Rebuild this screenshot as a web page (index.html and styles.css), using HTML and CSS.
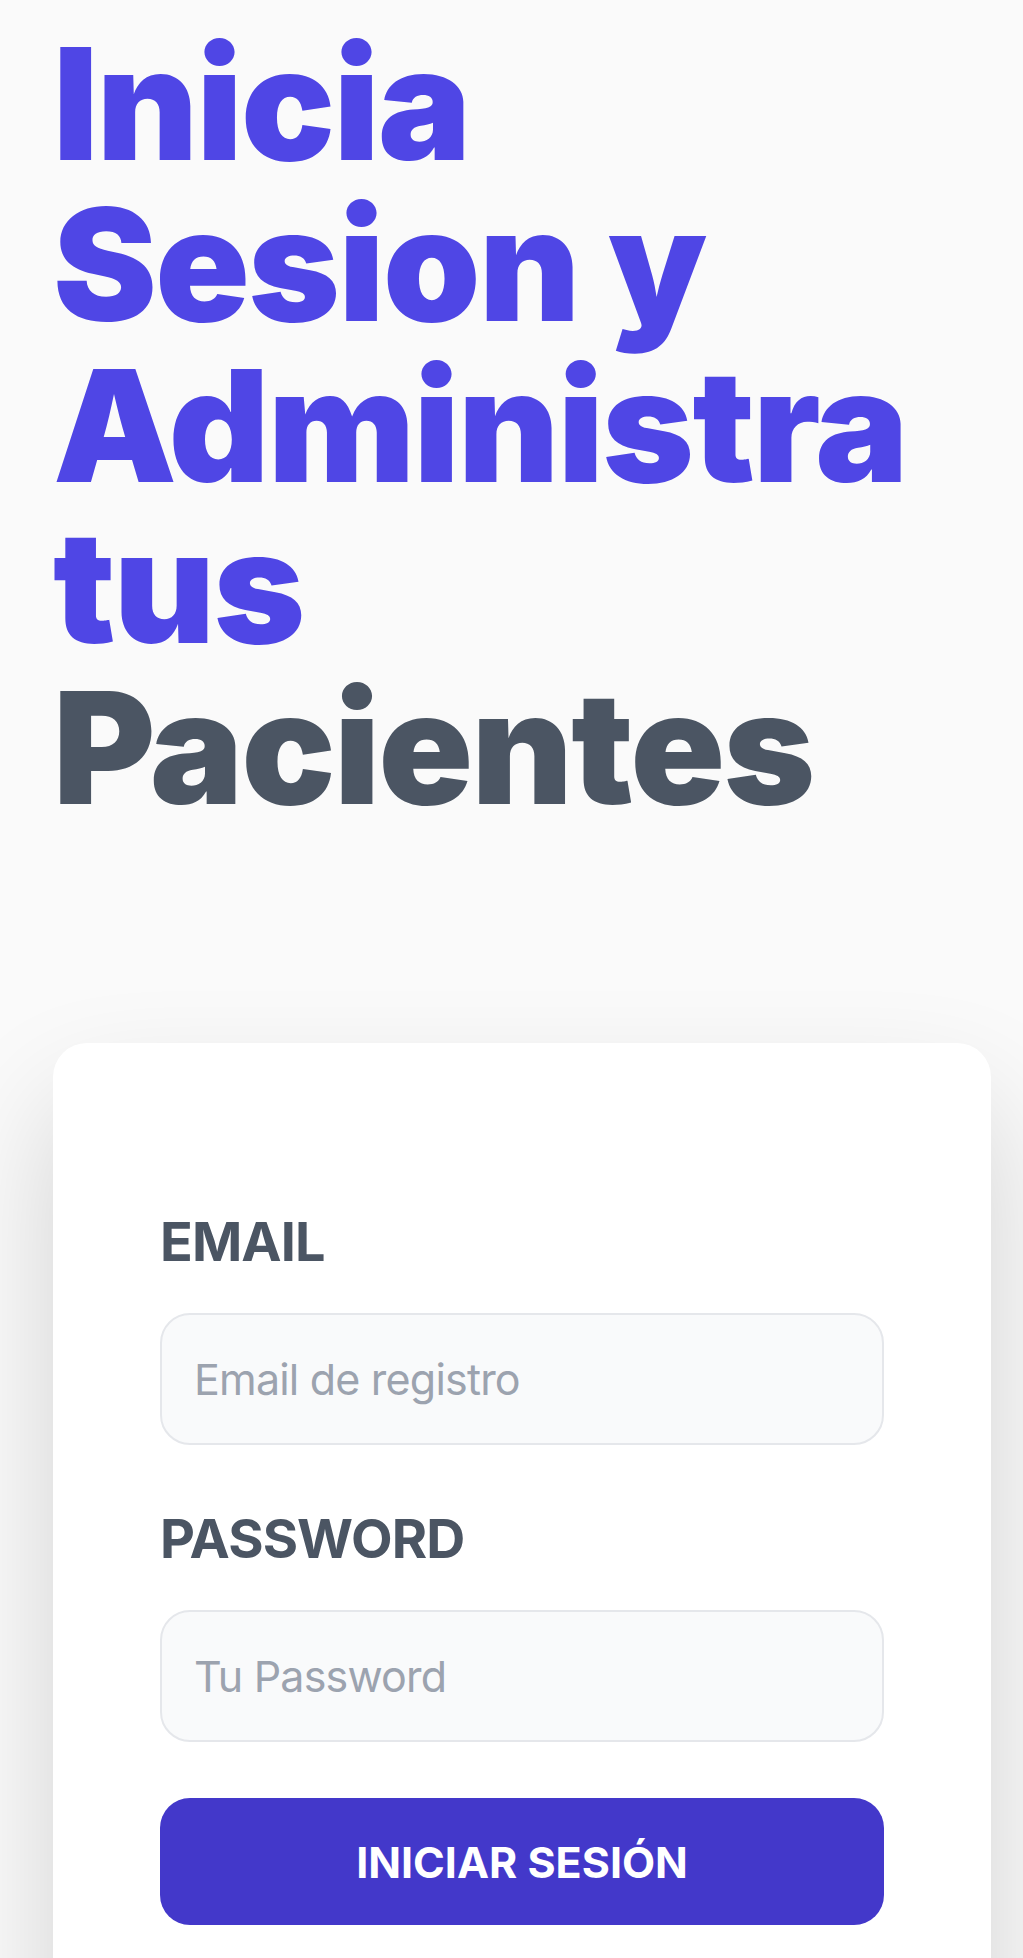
FILE: index.html
```html
<!DOCTYPE html>
<html lang="es">
<head>
<meta charset="utf-8">
<title>Iniciar sesión</title>
<link rel="stylesheet" href="styles.css">
</head>
<body>
<div class="page">
  <header class="hero">
    <h1 class="hero-title">Inicia Sesion y Administra tus <span class="hero-accent">Pacientes</span></h1>
  </header>
  <main class="card">
    <form class="form">
      <div class="field">
        <label class="field-label" for="email">Email</label>
        <input class="field-input" id="email" type="email" placeholder="Email de registro">
      </div>
      <div class="field">
        <label class="field-label" for="password">Password</label>
        <input class="field-input" id="password" type="password" placeholder="Tu Password">
      </div>
      <button class="submit" type="button">Iniciar Sesión</button>
    </form>
  </main>
</div>
</body>
</html>
```
FILE: styles.css
```css
* { box-sizing: border-box; }

html, body {
  margin: 0;
  padding: 0;
  background: #fafafa;
  font-family: Inter, "Noto Sans", "DejaVu Sans", sans-serif;
}

.page {
  height: 100vh;
  overflow: hidden;
  padding: 23px 32px 0 53px;
}

.hero-title {
  margin: 0;
  font-size: 156px;
  line-height: 161px;
  font-weight: 900;
  color: #4f46e5;
  letter-spacing: -1.6px;
}

.hero-accent {
  color: #4b5563;
}

.card {
  margin-top: 215px;
  background: #ffffff;
  border-radius: 34px;
  box-shadow: 0 60px 120px rgba(0, 0, 0, 0.16);
  padding: 161px 107px 120px;
}

.form {
  display: flex;
  flex-direction: column;
}

.field {
  display: flex;
  flex-direction: column;
  gap: 33px;
  margin-bottom: 56px;
}

.field-label {
  font-size: 54px;
  line-height: 76px;
  font-weight: 700;
  color: #4b5563;
  text-transform: uppercase;
  letter-spacing: -0.9px;
}

.field-input {
  width: 100%;
  height: 132px;
  padding: 0 32px;
  border: 2px solid #e5e7eb;
  border-radius: 30px;
  background: #f9fafb;
  font-family: inherit;
  font-size: 43px;
  letter-spacing: -0.8px;
  color: #374151;
  outline: none;
}

.field-input::placeholder {
  color: #9ca3af;
}

.submit {
  height: 127px;
  border: 0;
  border-radius: 30px;
  background: #4338ca;
  color: #ffffff;
  font-family: inherit;
  font-size: 43px;
  font-weight: 700;
  text-transform: uppercase;
}
```
